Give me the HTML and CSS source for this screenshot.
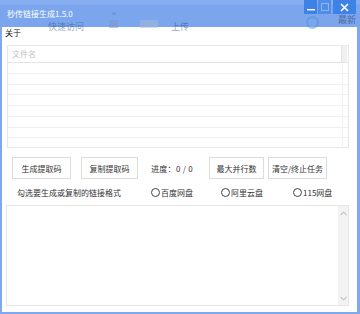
FILE: index.html
```html
<!DOCTYPE html>
<html lang="zh">
<head>
    <meta charset="UTF-8">
    <title>秒传链接生成1.5.0</title>
    <link rel="stylesheet" href="styles.css">
</head>
<body>
    <div id="window">
        <div id="titlebar">
            <!-- lo que se ve borroso detrás de la barra -->
            <div class="behind">
                <span class="bg-arrow">&#8963;</span>
                <span class="bg-thumb"></span>
                <span class="bg-text bg-quick">快速访问</span>
                <span class="bg-folder"></span>
                <span class="bg-text bg-upload">上传</span>
                <span class="bg-ie"></span>
                <span class="bg-text bg-latest">最新</span>
            </div>
            <div id="title">秒传链接生成1.5.0</div>
            <div id="caption-buttons">
                <div class="cap-btn">
                    <svg width="8" height="8" viewBox="0 0 8 8"><rect x="0" y="6" width="8" height="1.4" fill="#fff"/></svg>
                </div>
                <div class="cap-btn disabled">
                    <svg width="8" height="8" viewBox="0 0 8 8"><rect x="0.5" y="0.5" width="7" height="7" fill="none" stroke="#8fb5f0"/></svg>
                </div>
                <div class="cap-btn close">
                    <svg width="9" height="9" viewBox="0 0 9 9"><path d="M1 1L8 8M8 1L1 8" stroke="#fff" stroke-width="1.6"/></svg>
                </div>
            </div>
        </div>

        <div id="client">
            <div id="menu"><span class="menu-item">关于</span></div>

            <div id="file-list">
                <div class="list-header">
                    <div class="col-name">文件名</div>
                    <div class="col-end"></div>
                </div>
                <div class="list-row"><div class="col-name"></div><div class="col-end"></div></div>
                <div class="list-row"><div class="col-name"></div><div class="col-end"></div></div>
                <div class="list-row"><div class="col-name"></div><div class="col-end"></div></div>
                <div class="list-row"><div class="col-name"></div><div class="col-end"></div></div>
                <div class="list-row"><div class="col-name"></div><div class="col-end"></div></div>
                <div class="list-row"><div class="col-name"></div><div class="col-end"></div></div>
                <div class="list-row"><div class="col-name"></div><div class="col-end"></div></div>
                <div class="list-row last"><div class="col-name"></div><div class="col-end"></div></div>
            </div>

            <div id="actions">
                <button class="btn btn-gen">生成提取码</button>
                <button class="btn btn-copy">复制提取码</button>
                <span id="progress">进度：0 / 0</span>
                <button class="btn btn-max">最大并行数</button>
                <button class="btn btn-clear">清空/终止任务</button>
            </div>

            <div id="formats">
                <span class="formats-label">勾选要生成或复制的链接格式</span>
                <label class="radio r-baidu"><span class="dot"></span>百度网盘</label>
                <label class="radio r-ali"><span class="dot"></span>阿里云盘</label>
                <label class="radio r-115"><span class="dot"></span>115网盘</label>
            </div>

            <div id="output">
                <div class="out-text"></div>
                <div class="scrollbar">
                    <svg width="7" height="5" viewBox="0 0 7 5"><path d="M0.5 4L3.5 1L6.5 4" fill="none" stroke="#c8c8c8" stroke-width="1.2"/></svg>
                    <svg width="7" height="5" viewBox="0 0 7 5"><path d="M0.5 1L3.5 4L6.5 1" fill="none" stroke="#c8c8c8" stroke-width="1.2"/></svg>
                </div>
            </div>
        </div>
    </div>
</body>
</html>
```

FILE: styles.css
```css
body {
    margin: 0;
    font-family: "Noto Sans CJK SC", "Noto Sans", sans-serif;
    font-size: 8px;
    background: #7ca5ec;
}

#window {
    width: 360px;
    height: 314px;
    background: #7fa8ee;
    overflow: hidden;
}

#titlebar {
    position: relative;
    height: 27px;
    display: flex;
    justify-content: space-between;
    background: linear-gradient(180deg, #86adf0 0px, #86adf0 4px, #7ba5ec 5px, #7ba5ec 100%);
}

/* fondo borroso */
.behind {
    position: absolute;
    left: 0;
    top: 0;
    width: 360px;
    height: 27px;
    opacity: 0.5;
}

.bg-text {
    position: absolute;
    color: #2c4f8c;
    font-size: 9px;
    white-space: nowrap;
}

.bg-quick { left: 48px; top: 20px; }
.bg-upload { left: 171px; top: 20px; }
.bg-latest { left: 338px; top: 13px; color: #1c2f55; }

.bg-arrow {
    position: absolute;
    left: 110px;
    top: 9px;
    color: #3d5e9c;
    font-size: 9px;
}

.bg-thumb {
    position: absolute;
    left: 109px;
    top: 20px;
    width: 9px;
    height: 8px;
    background: #7a97cc;
}

.bg-folder {
    position: absolute;
    left: 140px;
    top: 20px;
    width: 18px;
    height: 8px;
    background: #a9bedc;
}

.bg-ie {
    position: absolute;
    left: 306px;
    top: 16px;
    width: 13px;
    height: 13px;
    border-radius: 50%;
    border: 2px solid #4e94d8;
    box-sizing: border-box;
}

#title {
    position: relative;
    padding: 8px 0 0 7px;
    color: #fff;
    font-size: 8px;
    line-height: 11px;
    white-space: nowrap;
}

#caption-buttons {
    position: relative;
    display: flex;
    gap: 1px;
    height: 14px;
    margin-right: 4px;
}

.cap-btn {
    width: 13px;
    height: 14px;
    background: #3e82e6;
    display: flex;
    align-items: center;
    justify-content: center;
}

.cap-btn.disabled {
    background: #4f8de8;
}

.cap-btn.close {
    width: 23px;
    margin-left: 1px;
}

#client {
    margin: 0 3px 0 2px;
    height: 285px;
    background: #fff;
    color: #333;
}

#menu {
    height: 18px;
    padding-left: 3px;
}

.menu-item {
    line-height: 12px;
    color: #222;
}

#file-list {
    margin-left: 5px;
    width: 342px;
    height: 103px;
    border: 1px solid #e8e8e8;
    box-sizing: border-box;
    overflow: hidden;
}

.list-header,
.list-row {
    display: flex;
}

.list-header {
    height: 17px;
    border-bottom: 1px solid #e4e4e4;
    box-sizing: border-box;
}

.list-header .col-name {
    width: 334px;
    padding-left: 4px;
    line-height: 16px;
    color: #c4c4c4;
    border-right: 1px solid #e4e4e4;
    box-sizing: border-box;
}

.list-header .col-end {
    width: 5px;
    background: #f0f0f0;
}

.list-row {
    height: 10.75px;
    border-bottom: 1px solid #efefef;
    box-sizing: border-box;
}

.list-row .col-name {
    width: 335px;
    border-right: 1px solid #f0f0f0;
    box-sizing: border-box;
}

.list-row.last {
    border-bottom: none;
}

#actions {
    display: flex;
    align-items: center;
    height: 22px;
    margin-top: 9px;
    padding-left: 10px;
}

.btn {
    height: 22px;
    padding: 0;
    border: 1px solid #dcdcdc;
    background: #fff;
    color: #333;
    font-family: inherit;
    font-size: 8px;
}

.btn-gen { width: 59px; }
.btn-copy { width: 57px; margin-left: 10px; }
.btn-max { width: 55px; margin-left: 12px; }
.btn-clear { width: 59px; margin-left: 4px; }

#progress {
    margin-left: 13px;
    width: 46px;
    white-space: nowrap;
    letter-spacing: 0.3px;
}

#formats {
    display: flex;
    align-items: center;
    height: 12px;
    margin-top: 7px;
    padding-left: 15px;
}

.formats-label {
    width: 134px;
}

.radio {
    display: flex;
    align-items: center;
    gap: 1px;
}

.r-ali { margin-left: 28px; }
.r-115 { margin-left: 30px; }

.dot {
    width: 9px;
    height: 9px;
    border: 1px solid #444;
    border-radius: 50%;
    box-sizing: border-box;
}

#output {
    display: flex;
    margin: 7px 0 0 4px;
    width: 343px;
    height: 101px;
    border: 1px solid #e6e6e6;
    box-sizing: border-box;
}

.out-text {
    flex: 1;
}

.scrollbar {
    width: 10px;
    background: #f3f3f3;
    display: flex;
    flex-direction: column;
    justify-content: space-between;
    align-items: center;
    padding: 5px 0 4px;
}
```
